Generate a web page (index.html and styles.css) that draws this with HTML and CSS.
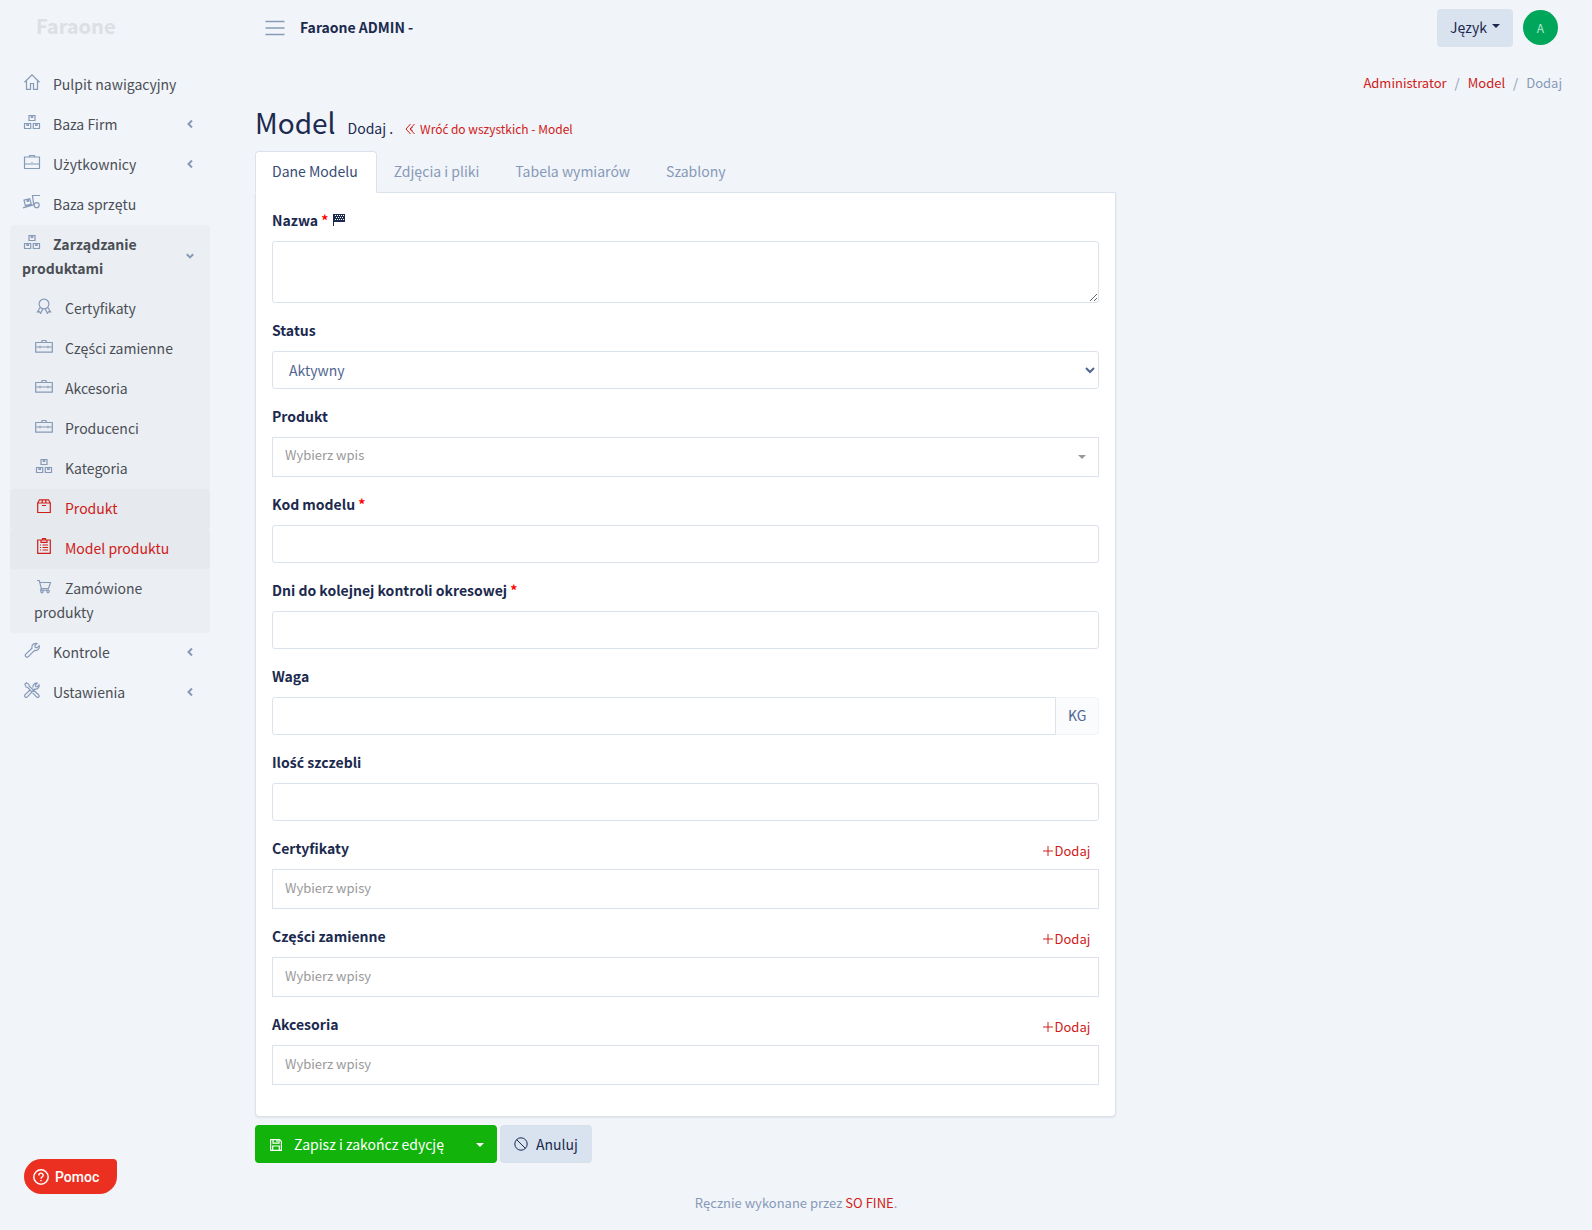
FILE: index.html
```html
<!DOCTYPE html>
<html lang="pl">
<head>
<meta charset="utf-8">
<title>Faraone ADMIN</title>
<meta name="viewport" content="width=device-width, initial-scale=1">
<link rel="stylesheet" href="styles.css">
</head>
<body>
<svg class="sprite" aria-hidden="true">
  <symbol id="i-home" viewBox="0 0 16 16"><path d="M.5 8.2 8 .9l7.5 7.3M2.500 6.500v8.800h4V9.500h3v5.800h4V6.500"/></symbol>
  <symbol id="i-boxes" viewBox="0 0 16 16"><path d="M5 1.500h6v5H5zM.5 9.500h6.200v5H.5zM9.300 9.500h6.200v5H9.300zM7.300 1.500v2h1.400v-2M3 9.500v2h1.400v-2M11.700 9.500v2h1.400v-2"/></symbol>
  <symbol id="i-briefcase" viewBox="0 0 16 16"><path d="M.5 3h15v11.500H.5zM.5 10h15M5.500 3V1.500h5V3M7.500 8.500h1"/></symbol>
  <symbol id="i-dolly" viewBox="0 0 18 16"><path d="m1 6.200 5.800-1.500 1.500 5.500-5.900 1.500zM3.900 5.500l.5 2 1.400-.4-.5-1.900M0 13.800l10.700-2.900L9.500 1.500H17"/><circle cx="13.700" cy="11.200" r="2.500"/></symbol>
  <symbol id="i-award" viewBox="0 0 16 16"><circle cx="8" cy="6" r="4.900"/><path d="M4 9.500 1.500 14l2-.3 1 1.800 2.300-4.600M12 9.500l2.500 4.500-2-.3-1 1.800-2.300-4.600"/></symbol>
  <symbol id="i-toolbox" viewBox="0 0 18 16"><path d="M.7 4.500h16.600v9.700H.7zM.7 9h3.600M5.700 9h6.600M13.700 9h3.600M5 7.800v2.400M13 7.800v2.400M6.500 4.500l.6-2h3.800l.6 2"/></symbol>
  <symbol id="i-box" viewBox="0 0 16 16"><path d="M1.700 5h12.600v9.500H1.700zM1.700 5 3.500 1.800h9L14.300 5M6 7.500h4M6.500 1.800 6 5M9.500 1.800 10 5"/></symbol>
  <symbol id="i-clipboard" viewBox="0 0 16 16"><path d="M1.700 2h12.600v13.300H1.700zM5 2v2.300h6V2M6.500 2V.7h3V2M4 7h1M6.500 7H12M4 9.500h1M6.500 9.500H12M4 12h1M6.500 12H12"/></symbol>
  <symbol id="i-cart" viewBox="0 0 16 16"><path d="M1 2.500h2.300l2 8h7.200l2-6H4M5.200 10.500l-.5 1.700h8.500"/><circle cx="6" cy="13.600" r="1.200"/><circle cx="12" cy="13.600" r="1.200"/></symbol>
  <symbol id="i-wrench" viewBox="0 0 16 16"><path d="M8 6.200C7.300 3 10.200.6 13 1.500L10.900 3.700l.4 1.700 1.700.4L15.100 3.600c.9 3-1.500 5.500-4.600 4.800L4.300 14.600a1.700 1.700 0 0 1-2.500-2.500z"/></symbol>
  <symbol id="i-tools" viewBox="0 0 16 16"><path d="m.9 2.100 1.400-1.300 2.500 1.500.5 1.800L14.800 13a1.500 1.500 0 0 1-2.100 2.100L3.800 5.500l-1.700-.4zM9 5.600C8.400 2.900 10.800.5 13.200 1.200L11.300 3.200l.3 1.400 1.400.3 2-2c.6 2.500-1.500 4.700-4.200 4.100L3.300 14.900a1.500 1.500 0 0 1-2.200-2.200l4.700-4.500"/></symbol>
  <symbol id="i-left" viewBox="0 0 8 10"><path d="M6 1.500 2.500 5 6 8.500" stroke-width="2"/></symbol>
  <symbol id="i-down" viewBox="0 0 8 10"><path d="M.8 3.200 4 6.400l3.200-3.200" stroke-width="2"/></symbol>
  <symbol id="i-menu" viewBox="0 0 20 16"><path d="M.5 1.500h19M.5 8h19M.5 14.500h19" stroke-width="1.500"/></symbol>
  <symbol id="i-back" viewBox="0 0 10 12"><path d="M5.500 1 1 6l4.500 5M9.500 1 5 6l4.500 5M7.500 4l-2 2 2 2"/></symbol>
  <symbol id="i-flag" viewBox="0 0 12 12"><path d="M.5 0v12" /><path d="M0 0h12v8H0z" fill="currentColor" stroke="none"/><path d="M2 1.500h9M3 3.500h8M2 5.500h9" stroke="#fff" stroke-dasharray="1 1"/></symbol>
  <symbol id="i-plus" viewBox="0 0 10 10"><path d="M5 0v10M0 5h10"/></symbol>
  <symbol id="i-save" viewBox="0 0 12 12"><path d="M.6.600h9l1.800 1.800v9H.6zM3 .6v3.600h6V.6M7 1v2M2.700 11.400V7h6.600v4.400" stroke-width="1.200"/></symbol>
  <symbol id="i-ban" viewBox="0 0 14 14"><circle cx="7" cy="7" r="6.200"/><path d="m2.600 2.600 8.800 8.800"/></symbol>
  <symbol id="i-help" viewBox="0 0 16 16"><circle cx="8" cy="8" r="7.200" stroke-width="1.500"/><path d="M5.800 6.400c0-3 4.400-2.900 4.400-.2C10.200 8 8 7.900 8 9.700M8 11v1.300" stroke-width="1.400"/></symbol>
</svg>

<header class="topbar">
  <a class="brand" href="#">Faraone</a>
  <button class="toggler" type="button" aria-label="Menu"><svg><use href="#i-menu"/></svg></button>
  <a class="site" href="#">Faraone ADMIN -</a>
  <div class="topbar-end">
    <button class="btn btn-light lang" type="button">Język<span class="caret"></span></button>
    <a class="avatar" href="#">A</a>
  </div>
</header>

<div class="layout">
  <nav class="sidebar">
    <ul>
      <li><a href="#"><svg><use href="#i-home"/></svg>Pulpit nawigacyjny</a></li>
      <li><a class="has-sub" href="#"><span><svg><use href="#i-boxes"/></svg>Baza Firm</span><svg class="chev"><use href="#i-left"/></svg></a></li>
      <li><a class="has-sub" href="#"><span><svg><use href="#i-briefcase"/></svg>U<span class="pl">ż</span>ytkownicy</span><svg class="chev"><use href="#i-left"/></svg></a></li>
      <li><a href="#"><svg><use href="#i-dolly"/></svg>Baza sprzętu</a></li>
      <li class="open"><a class="has-sub" href="#"><span><svg><use href="#i-boxes"/></svg>Zarządzanie produktami</span><svg class="chev"><use href="#i-down"/></svg></a>
        <ul>
          <li><a href="#"><svg><use href="#i-award"/></svg>Certyfikaty</a></li>
          <li><a href="#"><svg><use href="#i-toolbox"/></svg>Czę<span class="pl">ś</span>ci zamienne</a></li>
          <li><a href="#"><svg><use href="#i-toolbox"/></svg>Akcesoria</a></li>
          <li><a href="#"><svg><use href="#i-toolbox"/></svg>Producenci</a></li>
          <li><a href="#"><svg><use href="#i-boxes"/></svg>Kategoria</a></li>
          <li><a class="active" href="#"><svg><use href="#i-box"/></svg>Produkt</a></li>
          <li><a class="active" href="#"><svg><use href="#i-clipboard"/></svg>Model produktu</a></li>
          <li><a href="#"><svg><use href="#i-cart"/></svg>Zamówione produkty</a></li>
        </ul>
      </li>
      <li><a class="has-sub" href="#"><span><svg><use href="#i-wrench"/></svg>Kontrole</span><svg class="chev"><use href="#i-left"/></svg></a></li>
      <li><a class="has-sub" href="#"><span><svg><use href="#i-tools"/></svg>Ustawienia</span><svg class="chev"><use href="#i-left"/></svg></a></li>
    </ul>
  </nav>

  <main>
    <ol class="breadcrumb">
      <li><a href="#">Administrator</a></li>
      <li><a href="#">Model</a></li>
      <li>Dodaj</li>
    </ol>
    <div class="heading">
      <h1>Model</h1>
      <span>Dodaj .</span>
      <a href="#"><svg><use href="#i-back"/></svg>Wró<span class="pl">ć</span> do wszystkich - Model</a>
    </div>

    <form class="column">
      <div class="tabs" role="tablist">
        <a class="current" role="tab" href="#">Dane Modelu</a>
        <a role="tab" href="#">Zdjęcia i pliki</a>
        <a role="tab" href="#">Tabela wymiarów</a>
        <a role="tab" href="#">Szablony</a>
      </div>
      <div class="card">
        <div class="field">
          <label for="nazwa">Nazwa <span class="req">*</span> <svg class="flag"><use href="#i-flag"/></svg></label>
          <textarea id="nazwa" class="control"></textarea>
        </div>
        <div class="field">
          <label for="status">Status</label>
          <select id="status" class="control"><option>Aktywny</option></select>
        </div>
        <div class="field">
          <label for="produkt">Produkt</label>
          <div class="picker">
            <select id="produkt"><option>Wybierz wpis</option></select>
            <span class="caret"></span>
          </div>
        </div>
        <div class="field">
          <label for="kod">Kod modelu <span class="req">*</span></label>
          <input id="kod" class="control" type="text">
        </div>
        <div class="field">
          <label for="dni">Dni do kolejnej kontroli okresowej <span class="req">*</span></label>
          <input id="dni" class="control" type="text">
        </div>
        <div class="field">
          <label for="waga">Waga</label>
          <div class="group"><input id="waga" class="control" type="text"><span class="addon">KG</span></div>
        </div>
        <div class="field">
          <label for="szczeble">Ilo<span class="pl">ść</span> szczebli</label>
          <input id="szczeble" class="control" type="text">
        </div>
        <div class="field">
          <div class="label-row"><label for="cert">Certyfikaty</label><a href="#"><svg><use href="#i-plus"/></svg>Dodaj</a></div>
          <input id="cert" class="multi" type="text" placeholder="Wybierz wpisy">
        </div>
        <div class="field">
          <div class="label-row"><label for="czesci">Czę<span class="pl">ś</span>ci zamienne</label><a href="#"><svg><use href="#i-plus"/></svg>Dodaj</a></div>
          <input id="czesci" class="multi" type="text" placeholder="Wybierz wpisy">
        </div>
        <div class="field">
          <div class="label-row"><label for="akc">Akcesoria</label><a href="#"><svg><use href="#i-plus"/></svg>Dodaj</a></div>
          <input id="akc" class="multi" type="text" placeholder="Wybierz wpisy">
        </div>
      </div>
      <div class="actions">
        <div class="split">
          <button class="btn btn-save" type="submit"><svg><use href="#i-save"/></svg>Zapisz i zakończ edycję</button>
          <button class="btn btn-save more" type="button" aria-label="Więcej opcji zapisu"><span class="caret"></span></button>
        </div>
        <button class="btn btn-light cancel" type="button"><svg><use href="#i-ban"/></svg>Anuluj</button>
      </div>
    </form>
  </main>
</div>

<footer>Ręcznie wykonane przez <a href="#">SO FINE</a>.</footer>
<button class="help" type="button"><svg><use href="#i-help"/></svg>Pomoc</button>
</body>
</html>
```
FILE: styles.css
```css
:root {
  --bg: #f1f4f9;
  --ink: #1b2a4e;
  --text: #506690;
  --muted: #869ab8;
  --line: #dce2eb;
  --soft: #d9e2ef;
  --red: #cf2018;
  --green: #12b30b;
}

*, *::before, *::after { box-sizing: border-box; }

body {
  margin: 0;
  min-height: 100vh;
  display: flex;
  flex-direction: column;
  background: var(--bg);
  color: var(--ink);
  font: 14px/24px "Noto Sans CJK JP", "Noto Sans", sans-serif;
}

button, input, select, textarea { font: inherit; margin: 0; }
a { color: var(--red); text-decoration: none; }
ul, ol { list-style: none; margin: 0; padding: 0; }
svg { fill: none; stroke: currentColor; }
.sprite { display: none; }

/* Polish letters that the CJK family has no glyph for */
.pl { font-family: "Noto Sans", sans-serif; line-height: 1; }

.caret {
  display: inline-block;
  border: 4px solid transparent;
  border-top-color: currentColor;
  border-bottom: 0;
}

.btn {
  height: 38px;
  padding: 0 13px;
  border: 0;
  border-radius: 4px;
  cursor: pointer;
}
.btn-light { background: var(--soft); color: var(--ink); }
.btn-save { background: var(--green); color: #fff; }

/* Top bar */
.topbar {
  display: flex;
  align-items: center;
  height: 55px;
}
.brand {
  width: 265px;
  padding: 0 0 3px 36px;
  color: #dcdfe4;
  font-size: 20px;
  font-weight: 700;
}
.toggler {
  display: flex;
  padding: 0;
  border: 0;
  background: none;
  color: var(--muted);
}
.toggler svg { width: 20px; height: 16px; }
.site {
  margin-left: 15px;
  padding-bottom: 2px;
  color: var(--ink);
  font-weight: 700;
}
.topbar-end {
  display: flex;
  align-items: center;
  gap: 10px;
  margin-left: auto;
  padding-right: 34px;
}
.lang { padding-bottom: 2px; }
.lang .caret { margin-left: 5px; vertical-align: 5px; }
.avatar {
  width: 35px;
  height: 35px;
  border-radius: 50%;
  background: #00a65a;
  color: #b5e8cf;
  font-size: 12px;
  line-height: 35px;
  text-align: center;
}

/* Sidebar */
.layout { display: flex; }
.sidebar {
  flex: 0 0 240px;
  padding: 10px 30px 0 10px;
}
.sidebar a {
  display: block;
  padding: 7px 12px 9px;
  border-radius: 4px;
  color: #4a4f55;
}
.sidebar svg {
  width: 20px;
  height: 16px;
  margin-right: 11px;
  color: var(--muted);
  stroke-width: 1.2;
}
.sidebar .has-sub {
  display: flex;
  align-items: center;
  justify-content: space-between;
}
.sidebar .chev {
  flex: none;
  width: 8px;
  height: 10px;
  margin-right: 4px;
}
.sidebar .open { border-radius: 4px; background: #ebeef3; }
.sidebar .open > a { font-weight: 700; }
.sidebar .open li a { padding-left: 24px; }
.sidebar a.active { background: #e6e9ee; color: var(--red); }
.sidebar a.active svg { color: inherit; }

/* Page heading */
main {
  flex: 1;
  min-width: 0;
  padding: 16px 15px 0 0;
}
.breadcrumb {
  display: flex;
  justify-content: flex-end;
  padding-right: 15px;
  color: var(--muted);
  font-size: 13px;
}
.breadcrumb li + li::before { content: "/"; padding: 0 8px; }
.heading {
  display: flex;
  align-items: baseline;
  gap: 12px;
  padding: 7px 15px 9px;
}
.heading h1 {
  margin: 0;
  font-size: 28px;
  font-weight: 400;
  line-height: 40px;
}
.heading a { font-size: 12px; }
.heading a svg { width: 10px; height: 12px; margin-right: 5px; vertical-align: -1px; }

/* Form */
.column { width: calc(100% * 2 / 3); padding: 0 15px; }
.tabs { display: flex; }
.tabs a {
  margin-bottom: -1px;
  padding: 7px 18px 9px 16px;
  border: 1px solid transparent;
  border-radius: 4px 4px 0 0;
  color: var(--muted);
}
.tabs .current {
  position: relative;
  border-color: var(--line);
  border-bottom-color: #fff;
  background: #fff;
  color: #384c74;
}
.card {
  padding: 15px 16px 31px;
  border: 1px solid var(--line);
  border-radius: 0 0 4px 4px;
  background: #fff;
  box-shadow: 0 1px 2px rgba(27, 42, 78, .08);
}
.field + .field { margin-top: 15px; }
.field label {
  display: block;
  margin-bottom: 9px;
  font-weight: 700;
}
.req { color: #f00; }
.flag { width: 12px; height: 12px; margin-left: 1px; }
.control {
  display: block;
  width: 100%;
  height: 38px;
  padding: 0 12px;
  border: 1px solid var(--line);
  border-radius: 3px;
  background: #fff;
  color: var(--text);
}
textarea.control { height: 62px; resize: vertical; }
.picker { display: grid; align-items: center; }
.picker select, .picker .caret { grid-area: 1 / 1; }
.picker select {
  appearance: none;
  width: 100%;
  height: 40px;
  padding: 0 12px 4px;
  border: 1px solid var(--line);
  border-radius: 0;
  background: #fff;
  color: #999;
  font-size: 13px;
}
.picker .caret {
  justify-self: end;
  margin-right: 13px;
  color: #999;
  pointer-events: none;
}
.group { display: flex; }
.group .control { flex: 1; border-radius: 3px 0 0 3px; }
.addon {
  padding: 5px 12px 7px;
  border: 1px solid #f1f4f8;
  border-left: 0;
  border-radius: 0 4px 4px 0;
  background: #f9fbfd;
  color: var(--text);
}
.label-row { display: flex; justify-content: space-between; }
.label-row a {
  margin-top: 3px;
  padding-right: 9px;
  font-size: 13px;
}
.label-row svg { width: 10px; height: 10px; margin-right: 2px; }
.multi {
  display: block;
  width: 100%;
  height: 40px;
  padding: 0 12px 4px;
  border: 1px solid var(--line);
  font-size: 13px;
}
.multi::placeholder { color: #999; }

.actions { display: flex; gap: 3px; padding-top: 8px; }
.split { display: flex; }
.split .btn:first-child { padding-right: 19px; border-radius: 4px 0 0 4px; }
.split .more { border-radius: 0 4px 4px 0; }
.actions svg { width: 14px; height: 14px; margin-right: 8px; vertical-align: -1px; }
.split svg { width: 12px; height: 12px; margin: 0 12px 0 2px; }
.more .caret { vertical-align: 3px; }
.cancel { padding: 0 14px; }

footer {
  margin-top: auto;
  padding: 15px 0;
  color: var(--muted);
  font-size: 13px;
  text-align: center;
}

/* Floating help button */
.help {
  position: fixed;
  left: 24px;
  bottom: 36px;
  display: flex;
  align-items: center;
  gap: 6px;
  height: 35px;
  padding: 0 18px 0 9px;
  border: 0;
  border-radius: 18px 4px 18px 18px;
  background: #eb2f21;
  color: #fff;
  font: 500 14px/20px Roboto, sans-serif;
}
.help svg { width: 16px; height: 16px; }
```
